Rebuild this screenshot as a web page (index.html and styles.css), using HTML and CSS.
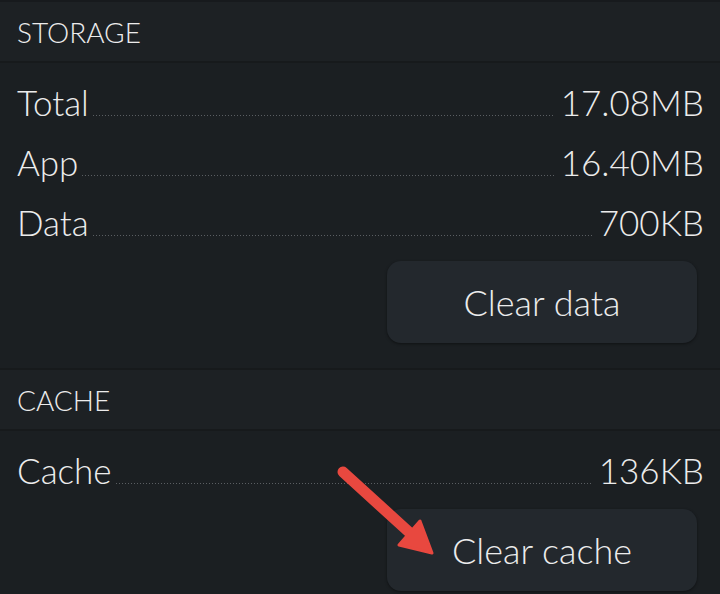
FILE: index.html
```html
<!DOCTYPE html>
<html lang="en">
<head>
  <meta charset="UTF-8" />
  <meta name="viewport" content="width=device-width, initial-scale=1.0"/>
  <title>Storage</title>
  <link rel="stylesheet" href="styles.css">
</head>
<body>
  <!-- Almacenamiento -->
  <section class="section">
    <div class="section-head">STORAGE</div>
    <div class="section-body">
      <div class="row"><span class="label">Total</span><span class="dots"></span><span class="value">17.08MB</span></div>
      <div class="row"><span class="label">App</span><span class="dots"></span><span class="value">16.40MB</span></div>
      <div class="row"><span class="label">Data</span><span class="dots"></span><span class="value">700KB</span></div>
      <div class="actions"><button class="btn">Clear data</button></div>
    </div>
  </section>

  <!-- Caché -->
  <section class="section">
    <div class="section-head">CACHE</div>
    <div class="section-body">
      <div class="row"><span class="label">Cache</span><span class="dots"></span><span class="value">136KB</span></div>
      <div class="actions"><button class="btn">Clear cache</button></div>
    </div>
  </section>

  <!-- Flecha -->
  <svg class="arrow" width="720" height="594" viewBox="0 0 720 594">
    <line x1="343" y1="472" x2="410" y2="533" stroke="#e8483f" stroke-width="11" stroke-linecap="round"/>
    <polygon points="420,521 432,553 399,545" fill="#e8483f" stroke="#e8483f" stroke-width="3" stroke-linejoin="round"/>
  </svg>
</body>
</html>
```

FILE: styles.css
```css
* { box-sizing: border-box; margin: 0; padding: 0; }

body {
  font-family: 'Lato', 'Noto Sans', sans-serif;
  font-weight: 300;
  background: #1b1f22;
  color: #ececec;
  height: 594px;
  overflow: hidden;
  position: relative;
  border-top: 2px solid #171a1d;
}

.section-head {
  height: 61px;
  padding: 0 17px;
  display: flex;
  align-items: center;
  font-size: 28px;
  background: #1d2124;
  border-bottom: 2px solid #171a1c;
}

.section-body {
  padding: 10px 23px 25px 17px;
}

.section + .section {
  border-top: 2px solid #171a1c;
}

.row {
  height: 60px;
  display: flex;
  align-items: baseline;
  font-size: 35px;
  padding-top: 8px;
}

.dots {
  flex: 1;
  height: 1px;
  margin: 0 7px 0 4px;
  background-image: linear-gradient(to right, #5a5e62 1px, transparent 1px);
  background-size: 3px 1px;
}

.value {
  margin-right: -7px;
}

.actions {
  display: flex;
  justify-content: flex-end;
  margin-top: 8px;
}

.btn {
  width: 310px;
  height: 82px;
  border: none;
  border-radius: 14px;
  background: #23282d;
  color: #ececec;
  font-family: inherit;
  font-weight: 300;
  font-size: 36px;
  box-shadow: 0 1px 3px rgba(0,0,0,0.45);
}

.arrow {
  position: absolute;
  top: -2px;
  left: 0;
  pointer-events: none;
}
```
